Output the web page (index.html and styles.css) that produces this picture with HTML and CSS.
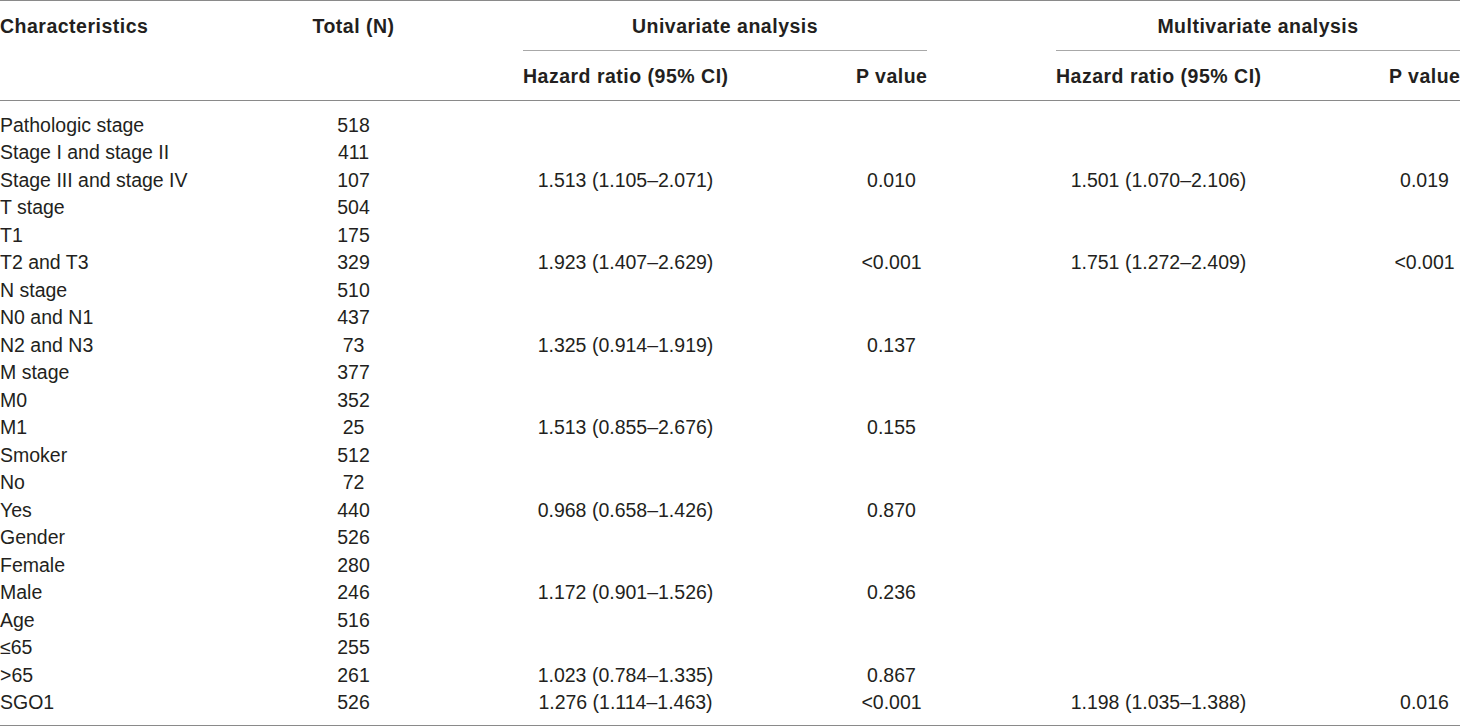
FILE: index.html
```html
<!DOCTYPE html>
<html lang="en">
<head>
    <meta charset="UTF-8">
    <title>Cox regression analysis</title>
    <link rel="stylesheet" href="styles.css">
</head>
<body>
    <table class="cox-table">
        <colgroup>
            <col class="col-char">
            <col class="col-total">
            <col class="col-hr">
            <col class="col-p">
            <col class="col-hr">
            <col class="col-p-last">
        </colgroup>
        <thead>
            <tr class="group-row">
                <th rowspan="2" class="char">Characteristics</th>
                <th rowspan="2" class="total">Total (N)</th>
                <th colspan="2" class="group uni"><div class="group-title">Univariate analysis</div></th>
                <th colspan="2" class="group multi"><div class="group-title">Multivariate analysis</div></th>
            </tr>
            <tr class="sub-row">
                <th class="hr">Hazard ratio (95% CI)</th>
                <th class="p">P value</th>
                <th class="hr">Hazard ratio (95% CI)</th>
                <th class="p last">P value</th>
            </tr>
        </thead>
        <tbody>
            <tr><td class="char">Pathologic stage</td><td class="total">518</td><td></td><td class="p"></td><td></td><td class="p last"></td></tr>
            <tr><td class="char">Stage I and stage II</td><td class="total">411</td><td></td><td class="p"></td><td></td><td class="p last"></td></tr>
            <tr><td class="char">Stage III and stage IV</td><td class="total">107</td><td class="hr">1.513 (1.105&ndash;2.071)</td><td class="p">0.010</td><td class="hr">1.501 (1.070&ndash;2.106)</td><td class="p last">0.019</td></tr>
            <tr><td class="char">T stage</td><td class="total">504</td><td></td><td class="p"></td><td></td><td class="p last"></td></tr>
            <tr><td class="char">T1</td><td class="total">175</td><td></td><td class="p"></td><td></td><td class="p last"></td></tr>
            <tr><td class="char">T2 and T3</td><td class="total">329</td><td class="hr">1.923 (1.407&ndash;2.629)</td><td class="p">&lt;0.001</td><td class="hr">1.751 (1.272&ndash;2.409)</td><td class="p last">&lt;0.001</td></tr>
            <tr><td class="char">N stage</td><td class="total">510</td><td></td><td class="p"></td><td></td><td class="p last"></td></tr>
            <tr><td class="char">N0 and N1</td><td class="total">437</td><td></td><td class="p"></td><td></td><td class="p last"></td></tr>
            <tr><td class="char">N2 and N3</td><td class="total">73</td><td class="hr">1.325 (0.914&ndash;1.919)</td><td class="p">0.137</td><td></td><td class="p last"></td></tr>
            <tr><td class="char">M stage</td><td class="total">377</td><td></td><td class="p"></td><td></td><td class="p last"></td></tr>
            <tr><td class="char">M0</td><td class="total">352</td><td></td><td class="p"></td><td></td><td class="p last"></td></tr>
            <tr><td class="char">M1</td><td class="total">25</td><td class="hr">1.513 (0.855&ndash;2.676)</td><td class="p">0.155</td><td></td><td class="p last"></td></tr>
            <tr><td class="char">Smoker</td><td class="total">512</td><td></td><td class="p"></td><td></td><td class="p last"></td></tr>
            <tr><td class="char">No</td><td class="total">72</td><td></td><td class="p"></td><td></td><td class="p last"></td></tr>
            <tr><td class="char">Yes</td><td class="total">440</td><td class="hr">0.968 (0.658&ndash;1.426)</td><td class="p">0.870</td><td></td><td class="p last"></td></tr>
            <tr><td class="char">Gender</td><td class="total">526</td><td></td><td class="p"></td><td></td><td class="p last"></td></tr>
            <tr><td class="char">Female</td><td class="total">280</td><td></td><td class="p"></td><td></td><td class="p last"></td></tr>
            <tr><td class="char">Male</td><td class="total">246</td><td class="hr">1.172 (0.901&ndash;1.526)</td><td class="p">0.236</td><td></td><td class="p last"></td></tr>
            <tr><td class="char">Age</td><td class="total">516</td><td></td><td class="p"></td><td></td><td class="p last"></td></tr>
            <tr><td class="char">&le;65</td><td class="total">255</td><td></td><td class="p"></td><td></td><td class="p last"></td></tr>
            <tr><td class="char">&gt;65</td><td class="total">261</td><td class="hr">1.023 (0.784&ndash;1.335)</td><td class="p">0.867</td><td></td><td class="p last"></td></tr>
            <tr><td class="char">SGO1</td><td class="total">526</td><td class="hr">1.276 (1.114&ndash;1.463)</td><td class="p">&lt;0.001</td><td class="hr">1.198 (1.035&ndash;1.388)</td><td class="p last">0.016</td></tr>
        </tbody>
    </table>
</body>
</html>
```

FILE: styles.css
```css
:root {
    --text: #231f20;
    --rule: #8a8a8a;
    --rule-light: #a8a8a8;
}

body {
    margin: 0;
    background: #ffffff;
    color: var(--text);
    font-family: 'Liberation Sans', Arial, sans-serif;
    font-size: 19.5px;
}

.cox-table {
    width: 1460px;
    table-layout: fixed;
    border-collapse: collapse;
    border-top: 1px solid var(--rule);
    border-bottom: 1.5px solid var(--rule);
    line-height: 27.5px;
}

.col-char { width: 290px; }
.col-total { width: 233px; }
.col-hr { width: 205px; }
.col-p { width: 328px; }
.col-p-last { width: 199px; }

th, td {
    padding: 0;
    text-align: center;
    white-space: nowrap;
}

th {
    font-weight: bold;
    letter-spacing: 0.5px;
    vertical-align: top;
}

thead {
    border-bottom: 1px solid var(--rule);
}

.group-row th {
    padding-top: 11.5px;
}

.sub-row th {
    padding-top: 11.5px;
    padding-bottom: 9.5px;
}

.group-title {
    padding-bottom: 10px;
    border-bottom: 1px solid var(--rule-light);
}

.group.uni {
    padding-right: 129px;
}

.char {
    text-align: left;
}

.total {
    padding-right: 106px;
}

.p {
    padding-left: 128px;
    padding-right: 129px;
}

.p.last {
    padding-right: 0;
}

tbody tr:first-child td {
    padding-top: 11px;
}

tbody tr:last-child td {
    padding-bottom: 8px;
}
```
